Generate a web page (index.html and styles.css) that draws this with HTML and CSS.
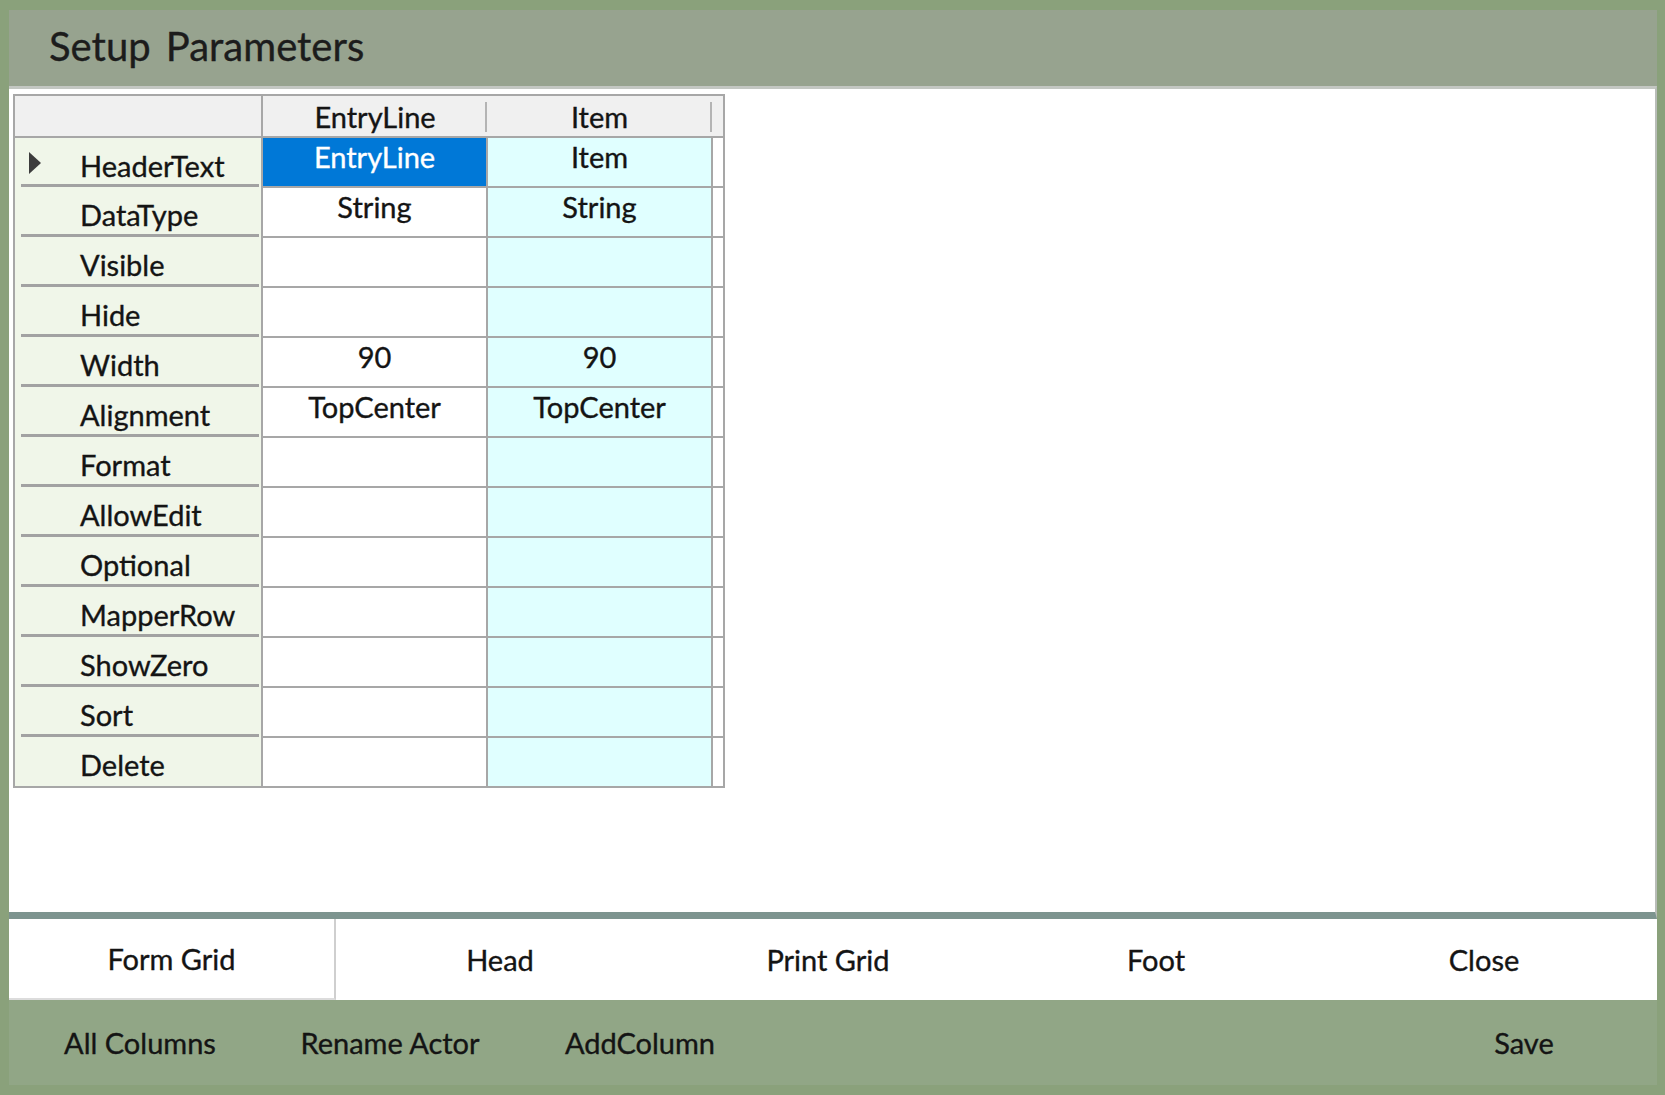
FILE: index.html
```html
<!DOCTYPE html>
<html lang="en">
<head>
    <meta charset="UTF-8">
    <title>Setup Parameters</title>
    <link rel="stylesheet" href="styles.css">
</head>
<body>
    <div class="window">
        <div class="titlebar">
            <h1>Setup Parameters</h1>
        </div>

        <div class="panel">
            <table class="grid">
                <colgroup>
                    <col class="c-head">
                    <col class="c-data">
                    <col class="c-data">
                    <col class="c-fill">
                </colgroup>
                <thead>
                    <tr>
                        <th class="corner"></th>
                        <th>EntryLine</th>
                        <th>Item</th>
                        <th class="fill"></th>
                    </tr>
                </thead>
                <tbody>
                    <tr>
                        <th class="rowhead"><span class="pointer"></span>HeaderText</th>
                        <td class="selected">EntryLine</td>
                        <td class="alt">Item</td>
                        <td class="fill"></td>
                    </tr>
                    <tr>
                        <th class="rowhead">DataType</th>
                        <td>String</td>
                        <td class="alt">String</td>
                        <td class="fill"></td>
                    </tr>
                    <tr>
                        <th class="rowhead">Visible</th>
                        <td></td>
                        <td class="alt"></td>
                        <td class="fill"></td>
                    </tr>
                    <tr>
                        <th class="rowhead">Hide</th>
                        <td></td>
                        <td class="alt"></td>
                        <td class="fill"></td>
                    </tr>
                    <tr>
                        <th class="rowhead">Width</th>
                        <td>90</td>
                        <td class="alt">90</td>
                        <td class="fill"></td>
                    </tr>
                    <tr>
                        <th class="rowhead">Alignment</th>
                        <td>TopCenter</td>
                        <td class="alt">TopCenter</td>
                        <td class="fill"></td>
                    </tr>
                    <tr>
                        <th class="rowhead">Format</th>
                        <td></td>
                        <td class="alt"></td>
                        <td class="fill"></td>
                    </tr>
                    <tr>
                        <th class="rowhead">AllowEdit</th>
                        <td></td>
                        <td class="alt"></td>
                        <td class="fill"></td>
                    </tr>
                    <tr>
                        <th class="rowhead">Optional</th>
                        <td></td>
                        <td class="alt"></td>
                        <td class="fill"></td>
                    </tr>
                    <tr>
                        <th class="rowhead">MapperRow</th>
                        <td></td>
                        <td class="alt"></td>
                        <td class="fill"></td>
                    </tr>
                    <tr>
                        <th class="rowhead">ShowZero</th>
                        <td></td>
                        <td class="alt"></td>
                        <td class="fill"></td>
                    </tr>
                    <tr>
                        <th class="rowhead">Sort</th>
                        <td></td>
                        <td class="alt"></td>
                        <td class="fill"></td>
                    </tr>
                    <tr>
                        <th class="rowhead">Delete</th>
                        <td></td>
                        <td class="alt"></td>
                        <td class="fill"></td>
                    </tr>
                </tbody>
            </table>
        </div>

        <div class="tabs">
            <button class="tab active">Form Grid</button>
            <button class="tab">Head</button>
            <button class="tab">Print Grid</button>
            <button class="tab">Foot</button>
            <button class="tab">Close</button>
        </div>

        <div class="actions">
            <button class="action">All Columns</button>
            <button class="action">Rename Actor</button>
            <button class="action">AddColumn</button>
            <button class="action save">Save</button>
        </div>
    </div>
</body>
</html>
```

FILE: styles.css
```css
* {
    margin: 0;
    padding: 0;
    box-sizing: border-box;
}

body {
    font-family: Lato, 'Open Sans', sans-serif;
    color: #141414;
    background: #8aa17b;
    -webkit-text-stroke: 0.35px;
}

.window {
    width: 1665px;
    height: 1095px;
    padding: 10px 8px 10px 9px;
    display: flex;
    flex-direction: column;
    background: #8aa17b;
}

.titlebar {
    height: 76px;
    flex-shrink: 0;
    display: flex;
    align-items: center;
    padding-left: 40px;
    background: #97a38f;
}

.titlebar h1 {
    font-size: 40px;
    font-weight: normal;
    color: #1c1c1c;
    word-spacing: 5px;
    padding-bottom: 4px;
}

.panel {
    flex: 1;
    background: #fff;
    border-top: 3px solid #c3c7c2;
    border-right: 2px solid #b9bdb8;
    border-bottom: 7px solid #7d948f;
    padding: 5px 0 0 4px;
}

/* grid */
.grid {
    border-collapse: collapse;
    table-layout: fixed;
    width: 710px;
    border: 2px solid #a7a7a7;
    font-size: 29px;
}

.c-head { width: 248px; }
.c-data { width: 225px; }
.c-fill { width: 12px; }

.grid th,
.grid td {
    font-weight: normal;
    text-align: center;
    border: 2px solid #a7a7a7;
}

.grid thead th {
    height: 42px;
    padding-top: 2px;
    line-height: 30px;
    background: #f0f0f0;
    border-bottom: 2px solid #a7a7a7;
    border-left: none;
    border-right: none;
    background-image: linear-gradient(#b4b4b4, #b4b4b4);
    background-repeat: no-repeat;
    background-position: right 0 top 6px;
    background-size: 2px calc(100% - 10px);
}

.grid thead th.corner {
    background-image: none;
    border-right: 2px solid #a7a7a7;
}

.grid thead th.fill {
    background-image: none;
}

.grid td {
    height: 50px;
    vertical-align: top;
    padding-top: 4px;
    line-height: 30px;
    background: #fff;
}

.grid td.alt {
    background: #e0ffff;
}

.grid td.selected {
    background: #0078d7;
    color: #fff;
}

.grid td.fill {
    background: #fff;
}

.grid .rowhead {
    text-align: left;
    padding: 6px 0 0 65px;
    line-height: 30px;
    border-top: none;
    border-bottom: none;
    border-left: none;
    background: linear-gradient(#a2a2a2, #a2a2a2) no-repeat 6px 100% / calc(100% - 8px) 3px, #f0f6e9;
}

.grid tbody tr:last-child .rowhead {
    background: #f0f6e9;
}

.pointer {
    display: inline-block;
    vertical-align: middle;
    width: 0;
    height: 0;
    margin: -12px 39px 0 -51px;
    border-top: 11px solid transparent;
    border-bottom: 11px solid transparent;
    border-left: 12px solid #3c3c3c;
}

/* tab strip */
.tabs {
    height: 81px;
    flex-shrink: 0;
    display: grid;
    grid-template-columns: 327px repeat(4, 328px);
    background: #fff;
}

.tab {
    font-family: inherit;
    font-size: 29px;
    color: #141414;
    background: #fff;
    border: none;
    cursor: pointer;
}

.tab.active {
    border-right: 2px solid #cfcfcf;
    border-bottom: 2px solid #dcdcdc;
}

/* bottom buttons */
.actions {
    height: 85px;
    flex-shrink: 0;
    display: flex;
    align-items: center;
    padding: 0 8px 0 6px;
    background: #91a686;
}

.action {
    width: 250px;
    height: 100%;
    font-family: inherit;
    font-size: 29px;
    color: #141414;
    background: transparent;
    border: none;
    cursor: pointer;
}

.action.save {
    margin-left: auto;
}
```
